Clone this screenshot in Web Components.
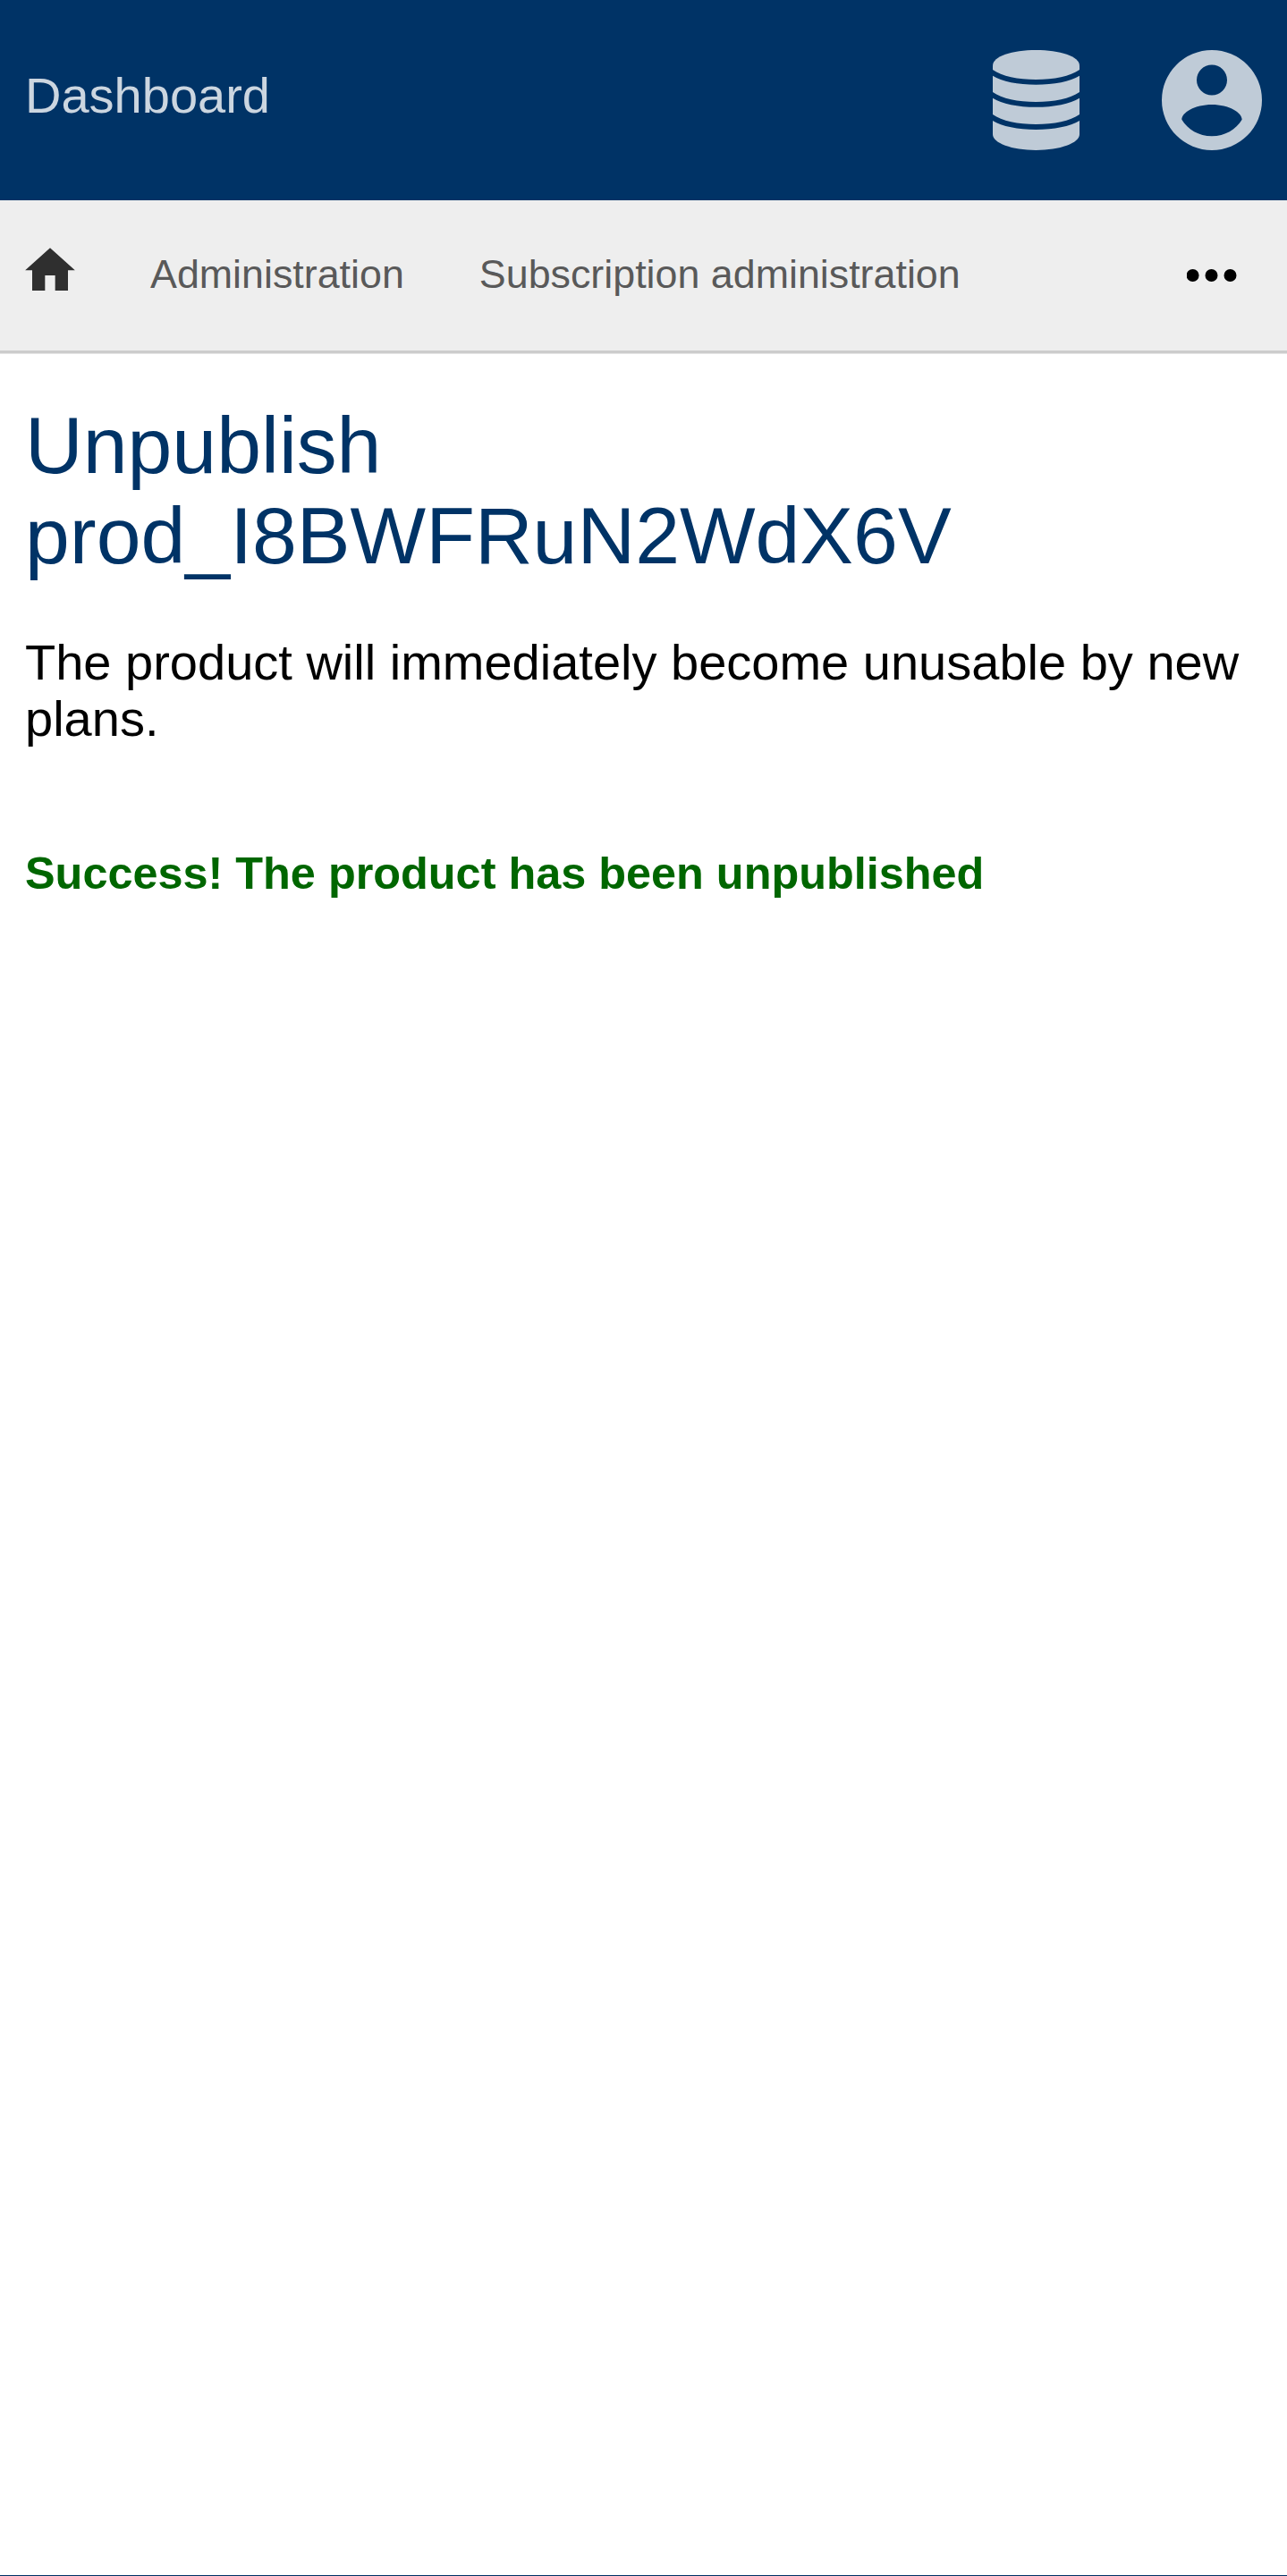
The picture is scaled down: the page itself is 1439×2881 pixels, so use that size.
<!DOCTYPE html>
<html lang="en">
<head>
<meta charset="utf-8">
<title>Dashboard</title>
<style>
html, body { margin: 0; background: #fff; }
body { font-family: "Liberation Sans", Arial, sans-serif; font-size: 56px; line-height: 1.125; }
</style>
</head>
<body>
<dashboard-page>
  <app-header slot="header">Dashboard</app-header>
  <app-navbar slot="nav">
    <nav-link>Administration</nav-link>
    <nav-link>Subscription administration</nav-link>
  </app-navbar>
  <page-heading>Unpublish prod_I8BWFRuN2WdX6V</page-heading>
  <page-text>The product will immediately become unusable by new plans.</page-text>
  <success-message>Success! The product has been unpublished</success-message>
</dashboard-page>
<script>
function define(name, html) {
  const template = document.createElement('template');
  template.innerHTML = html;
  customElements.define(name, class extends HTMLElement {
    constructor() {
      super();
      this.attachShadow({ mode: 'open' }).append(template.content.cloneNode(true));
    }
  });
}

define('database-icon', `
<style>:host { display: block; width: 97px; height: 112px; } svg { display: block; width: 100%; height: 100%; }</style>
<svg viewBox="90 108 291 336" fill="#bfcbd7" aria-hidden="true">
  <path d="M90 160C90 129 155 108 235 108S381 129 381 160V174C350 196 295 207 235 207S120 196 90 174Z"/>
  <path d="M90 194C120 213 175 224 235 224S350 213 381 194V249C350 271 295 282 235 282S120 271 90 249Z"/>
  <path d="M90 269C120 288 175 299.500 235 299.500S350 288 381 269V324C350 346 295 357 235 357S120 346 90 324Z"/>
  <path d="M90 345C120 364 175 375 235 375S350 364 381 345V391C381 420 316 444 235 444S90 420 90 391Z"/>
</svg>`);

define('account-icon', `
<style>:host { display: block; width: 112px; height: 112px; } svg { display: block; width: 100%; height: 100%; }</style>
<svg viewBox="0 0 336 336" aria-hidden="true">
  <path fill="#bfcbd7" fill-rule="evenodd" d="M168 0a168 168 0 1 0 0 336a168 168 0 1 0 0-336ZM168 49.500a51 51 0 1 1 0 102a51 51 0 1 1 0-102ZM67 233C67 210 110 183 168 183S269 210 269 233C249 266 212 288.500 168 288.500S87 266 67 233Z"/>
</svg>`);

define('home-icon', `
<style>:host { display: block; width: 56px; height: 48px; } svg { display: block; width: 100%; height: 100%; }</style>
<svg viewBox="84 231 168 144" fill="#2f2f2f" aria-hidden="true">
  <path d="M168 232L251.500 307H228V375H185V324H151V375H108V307H84.500Z"/>
</svg>`);

define('more-icon', `
<style>:host { display: block; width: 56px; height: 16px; } svg { display: block; width: 100%; height: 100%; }</style>
<svg viewBox="0 0 56 16" aria-hidden="true">
  <circle cx="6.600" cy="8" r="7"/><circle cx="27.500" cy="8" r="7"/><circle cx="48.500" cy="8" r="7"/>
</svg>`);

define('app-header', `
<style>
:host { display: flex; box-sizing: border-box; height: 224px; padding: 56px 28px; background: #003366; color: #ccd6e0; }
.title { flex: 1; padding-top: 19px; line-height: 63px; }
.actions { display: flex; gap: 92px; }
</style>
<div class="title"><slot></slot></div>
<div class="actions"><database-icon></database-icon><account-icon></account-icon></div>`);

define('nav-link', `
<style>:host { display: block; color: #595959; font-size: 44.8px; line-height: 50px; white-space: nowrap; }</style>
<slot></slot>`);

define('app-navbar', `
<style>
:host { display: flex; align-items: flex-start; box-sizing: border-box; height: 172px; padding: 0 56px 0 28px; background: #eee; border-bottom: 1px solid #e5e5e5; box-shadow: inset 0 -3px #ccc; }
home-icon { margin-top: 53px; }
.links { display: flex; flex: 1; gap: 84px; padding: 57px 0 0 84px; }
more-icon { margin-top: 76px; }
</style>
<home-icon></home-icon><div class="links"><slot></slot></div><more-icon></more-icon>`);

define('page-heading', `
<style>:host { display: block; } h1 { margin: 0 0 59px; font-size: 89.6px; font-weight: 400; line-height: 100.8px; color: #003366; }</style>
<h1><slot></slot></h1>`);

define('page-text', `
<style>:host { display: block; } p { margin: 0 0 114.4px; line-height: 63px; color: #000; }</style>
<p><slot></slot></p>`);

define('success-message', `
<style>:host { display: block; font-size: 50.4px; font-weight: 700; line-height: 56.7px; color: #006600; }</style>
<slot></slot>`);

define('dashboard-page', `
<style>
:host { display: flex; flex-direction: column; box-sizing: border-box; height: 2881px; border-bottom: 1px solid #003366; background: #fff; }
main { flex: 1; padding: 52px 28px 0; }
</style>
<slot name="header"></slot>
<slot name="nav"></slot>
<main><slot></slot></main>`);
</script>
</body>
</html>
